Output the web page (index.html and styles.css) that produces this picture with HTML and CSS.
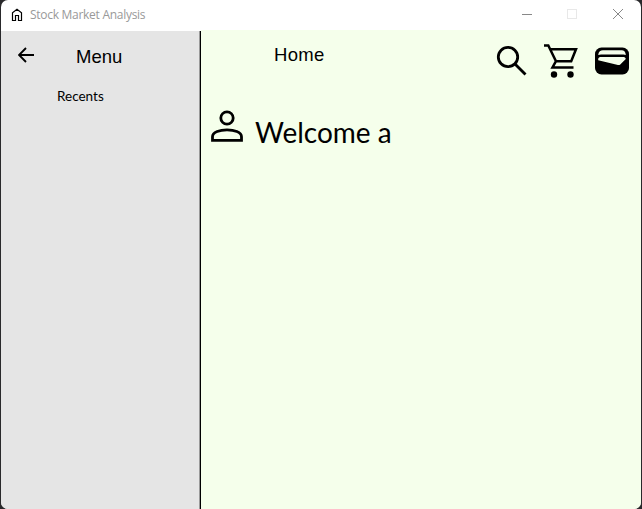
FILE: index.html
```html
<!DOCTYPE html>
<html lang="en">
<head>
<meta charset="utf-8">
<title>Stock Market Analysis</title>
<link rel="stylesheet" href="styles.css">
</head>
<body>
<div class="window">
  <header class="titlebar">
    <svg class="app-icon" width="12" height="14" viewBox="0 0 12 14"><path d="M1.500 12.500V4.700L6 1.200l4.500 3.500v7.800h-3V7.500h-3v5z"/></svg>
    <span class="app-name">Stock Market Analysis</span>
    <div class="controls">
      <svg width="10" height="12" viewBox="0 0 10 12"><path d="M0 6.500h10"/></svg>
      <svg class="disabled" width="10" height="12" viewBox="0 0 10 12"><rect x=".5" y="1.500" width="9" height="9"/></svg>
      <svg width="10" height="12" viewBox="0 0 10 12"><path d="M0 1l10 10M10 1L0 11"/></svg>
    </div>
  </header>
  <div class="body">
    <aside class="sidebar">
      <div class="menu-row">
        <svg class="back" width="16" height="16" viewBox="0 0 16 16"><path d="M16 8H1.500M8 1L1 8l7 7"/></svg>
        <h2 class="menu-title">Menu</h2>
      </div>
      <div class="recents">Recents</div>
    </aside>
    <main class="main">
      <div class="top-row">
        <h1 class="page-title">Home</h1>
        <div class="actions">
          <svg width="32" height="32" viewBox="0 0 32 32"><circle class="line" cx="12" cy="12" r="9.700"/><path class="line" d="M19 19l10.500 10.500"/></svg>
          <svg width="34" height="36" viewBox="0 0 34 36"><path class="line cart" d="M0 2.500h4.300l7.700 15.700h15.200L32 6.200H6.300M12 18.200l-3.500 6.200h21"/><circle cx="10" cy="31.500" r="3.200"/><circle cx="26.500" cy="31.500" r="3.200"/></svg>
          <svg width="34" height="28" viewBox="0 0 34 28"><rect x="0" y=".5" width="34" height="27" rx="6.500"/><path class="cutout" d="M3.200 8C3.600 4.500 5.500 3.200 8 3.200h18c3 0 4.500 1.300 4.800 4.800q-1-.5-2.300-.5H6q-1.500 0-2.800.5zM3.200 12C3.500 10.500 4.500 10 6 10h22c1.500 0 2.500.5 2.800 2L25 17.800q-1 .5-2 .2L3.200 13.300z"/></svg>
        </div>
      </div>
      <div class="welcome">
        <svg width="32" height="32" viewBox="0 0 32 32"><circle class="line" cx="16" cy="8" r="6.200"/><path class="line" d="M1.500 30.300v-3.500C1.500 21.800 9 19.800 16 19.800s14.500 2 14.500 7v3.500z"/></svg>
        <span class="welcome-text">Welcome a</span>
      </div>
    </main>
  </div>
</div>
</body>
</html>
```
FILE: styles.css
```css
* { box-sizing: border-box; }
body {
  margin: 0;
  height: 509px;
  padding: 0 1px;
  overflow: hidden;
  background: #29292b;
  color: #000;
  font-family: "Liberation Sans", Arial, sans-serif;
}
svg { display: block; flex: none; }
h1, h2 { margin: 0; font-weight: 400; font-size: 18.500px; line-height: 22px; }
.window {
  display: flex;
  flex-direction: column;
  height: 100%;
  overflow: hidden;
  border-radius: 7px;
  background: #fff;
}
.titlebar {
  display: flex;
  align-items: center;
  height: 30px;
  padding: 0 18px 0 10px;
}
.app-icon { fill: none; stroke: #000; stroke-width: 1.2; }
.app-name {
  margin: -1px 0 0 7px;
  color: #999;
  font: 12px "Open Sans", sans-serif;
  letter-spacing: -0.28px;
  white-space: nowrap;
}
.controls { display: flex; gap: 35px; margin: -2px 0 0 auto; }
.controls svg { fill: none; stroke: #888; stroke-width: 1; }
.controls svg:nth-child(-n+2) { margin-left: -1px; margin-right: 1px; }
.controls .disabled { stroke: #e8e8e8; }
.body { display: flex; flex: 1; }
.sidebar {
  width: 200px;
  margin-top: 1px;
  border-right: 1px solid #000;
  box-shadow: inset -1px 0 #999;
  background: #e5e5e5;
}
.menu-row { display: flex; align-items: flex-start; padding: 15px 0 0 17px; }
.back { margin-top: 1px; fill: none; stroke: #000; stroke-width: 1.9; }
.menu-title { margin-left: 42px; }
.recents {
  padding: 19px 0 0 56px;
  font: 13.500px/18px "Comic Sans MS", Lato, cursive;
}
.main { flex: 1; background: #f5ffeb; }
.top-row { display: flex; padding: 13px 12px 0 73px; height: 80px; }
.page-title { margin-top: 1px; letter-spacing: 0.3px; }
.actions { display: flex; margin-left: auto; }
.actions svg:nth-child(1) { margin: 2px 16px 0 0; }
.actions svg:nth-child(2) { margin-right: 17px; }
.actions svg:nth-child(3) { margin-top: 4px; }
.line { fill: none; stroke: #000; stroke-width: 2.8; }
.cart { stroke-width: 2.5; }
.cutout { fill: #f5ffeb; }
.welcome { display: flex; padding-left: 10px; }
.welcome-text {
  margin: 4px 0 0 12px;
  font: 28px/36px "Comic Sans MS", Lato, cursive;
  white-space: nowrap;
}
```
